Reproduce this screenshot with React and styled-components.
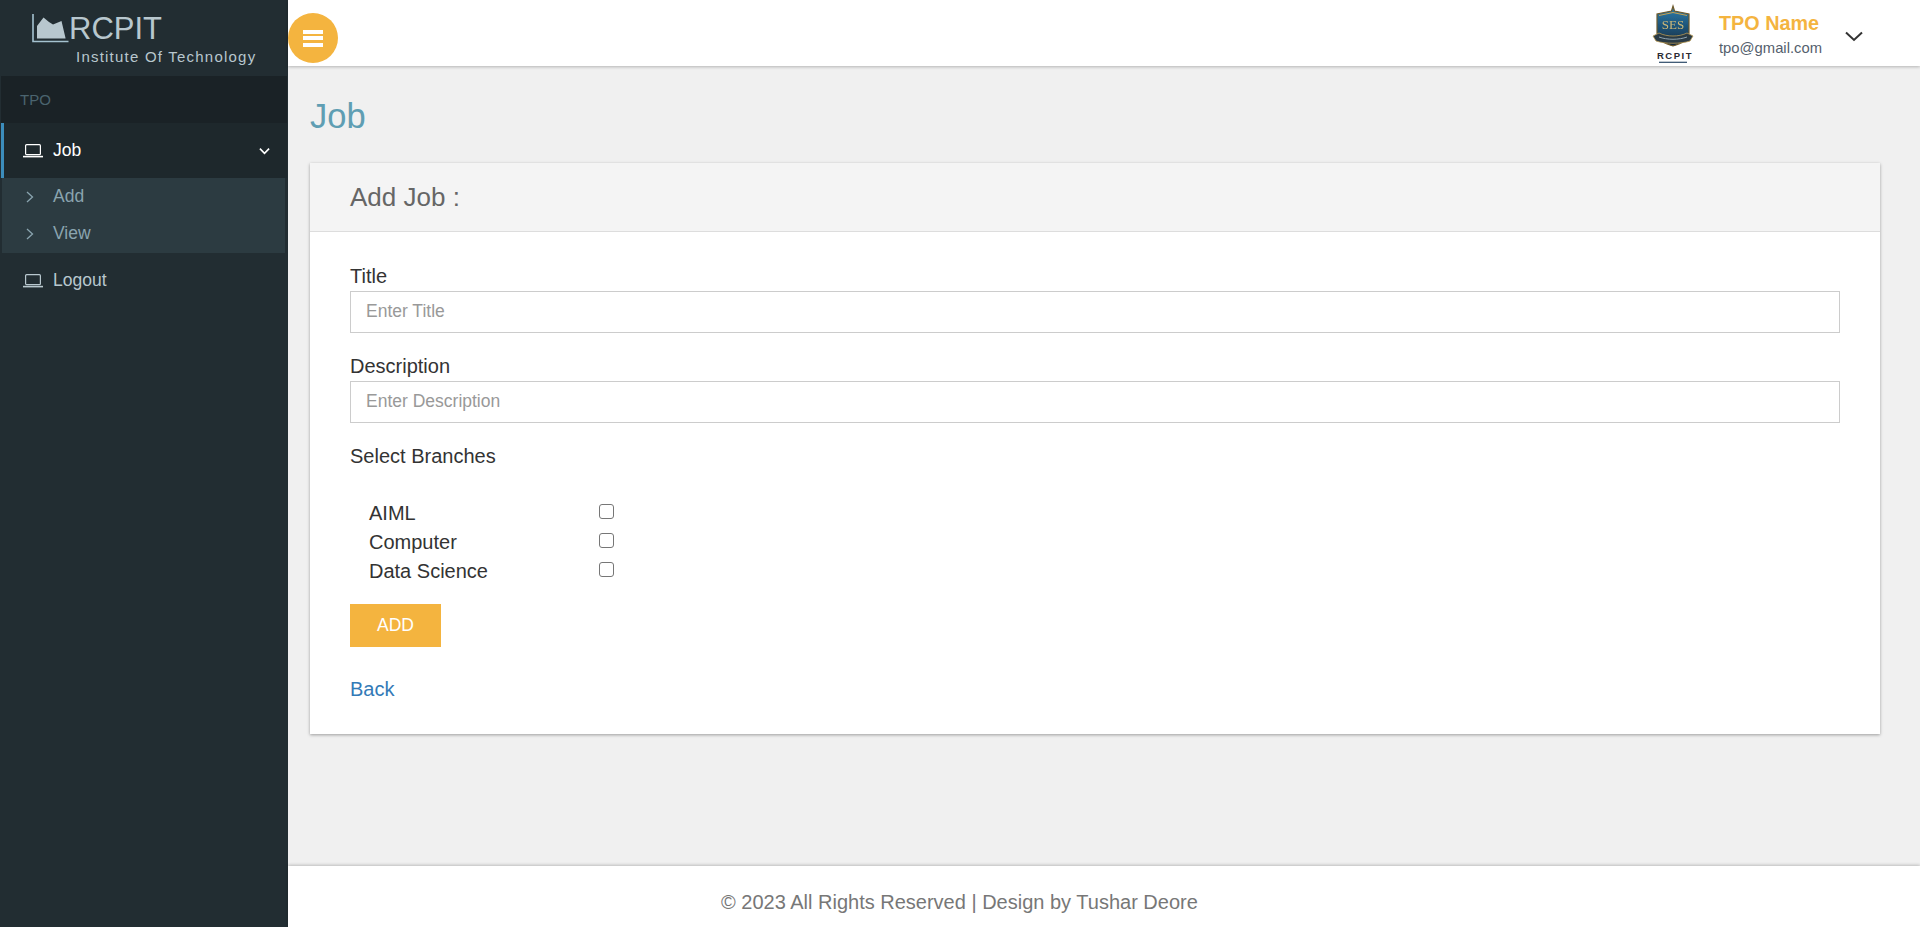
import React from "react";
import styled, { createGlobalStyle } from "styled-components";

const Global = createGlobalStyle`
  html, body { margin: 0; padding: 0; height: 100%; overflow: hidden; }
  body { font-family: "Liberation Sans", Arial, sans-serif; background: #f0f0f0; }
  * { box-sizing: border-box; }
`;

const Page = styled.div`
  display: flex;
  width: 1920px;
  height: 927px;
`;

const Sidebar = styled.aside`
  width: 288px;
  flex: none;
  background: #222d32;
  display: flex;
  flex-direction: column;
  padding: 0 1px;
`;

const Brand = styled.div`
  height: 76px;
  padding: 15px 0 0 31px;
  display: flex;
  flex-direction: column;
`;

const BrandTop = styled.div`
  display: flex;
  align-items: flex-end;
  height: 28px;
`;

const BrandName = styled.span`
  font-size: 31px;
  line-height: 28px;
  color: #b8c7ce;
`;

const BrandSub = styled.div`
  font-size: 15px;
  line-height: 17px;
  margin: 5px 0 0 44px;
  color: #b8c7ce;
  letter-spacing: 1.22px;
  white-space: nowrap;
`;

const SectionLabel = styled.div`
  height: 47px;
  background: #1a2226;
  color: #4b646f;
  font-size: 15px;
  padding-left: 19px;
  display: flex;
  align-items: center;
`;

const MenuItem = styled.div`
  height: 55px;
  display: flex;
  align-items: center;
  padding-left: ${(p) => (p.$active ? "19px" : "22px")};
  background: ${(p) => (p.$active ? "#1e282c" : "transparent")};
  border-left: ${(p) => (p.$active ? "3px solid #3c8dbc" : "none")};
  color: ${(p) => (p.$active ? "#fff" : "#b8c7ce")};
  font-size: 17.5px;
  gap: 10px;
`;

const MenuLabel = styled.span`
  flex: 1;
`;

const Caret = styled.svg`
  margin-right: 17px;
`;

const SubMenu = styled.div`
  background: #2c3b41;
  margin: 0 2px 0 1px;
  height: 75px;
  display: flex;
  flex-direction: column;
`;

const SubItem = styled.div`
  height: 37px;
  display: flex;
  align-items: center;
  padding-left: 24px;
  gap: 19px;
  color: #8aa4af;
  font-size: 17.5px;
`;

const Main = styled.div`
  flex: 1;
  min-width: 0;
  display: flex;
  flex-direction: column;
`;

const Header = styled.header`
  height: 66px;
  flex: none;
  background: #fff;
  box-shadow: 0 1px 3px rgba(0, 0, 0, 0.25);
  display: flex;
  align-items: center;
  position: relative;
`;

const Burger = styled.button`
  width: 50px;
  height: 50px;
  margin-top: 10px;
  border: 0;
  border-radius: 50%;
  background: #f4b43f;
  display: flex;
  flex-direction: column;
  align-items: center;
  justify-content: center;
  gap: 2.5px;
  padding: 0;
`;

const BurgerBar = styled.span`
  width: 20px;
  height: 4px;
  background: #fff;
`;

const UserBox = styled.div`
  margin-left: auto;
  display: flex;
  align-items: center;
  padding-right: 57px;
`;

const UserText = styled.div`
  margin: 0 23px 0 22px;
  padding-top: 2px;
  display: flex;
  flex-direction: column;
`;

const UserName = styled.div`
  color: #f4b43f;
  font-size: 19.8px;
  line-height: 23px;
  font-weight: 700;
`;

const UserMail = styled.div`
  color: #555f6e;
  font-size: 14.8px;
  line-height: 17px;
  margin-top: 5px;
`;

const UserCaret = styled.svg`
  margin-top: 7px;
`;

const Content = styled.main`
  flex: 1;
  padding: 0 40px 0 22px;
`;

const PageTitle = styled.h1`
  margin: 30px 0 0;
  height: 67px;
  font-size: 34.5px;
  line-height: 40px;
  font-weight: 400;
  color: #5f9eb3;
`;

const Card = styled.section`
  background: #fff;
  box-shadow: 0 1px 3px rgba(0, 0, 0, 0.35);
  height: 571px;
`;

const CardHead = styled.div`
  height: 69px;
  background: #f4f4f4;
  border-bottom: 1px solid #ddd;
  padding-left: 40px;
  display: flex;
  align-items: center;
  color: #666;
  font-size: 26px;
`;

const CardBody = styled.form`
  padding: 33px 40px 0;
`;

const FieldLabel = styled.label`
  display: block;
  font-size: 20px;
  line-height: 23px;
  color: #333;
  margin-bottom: 3px;
`;

const TextInput = styled.input`
  display: block;
  width: 100%;
  height: 42px;
  border: 1px solid #ccc;
  padding: 0 15px 1px;
  font-family: inherit;
  font-size: 17.5px;
  margin-bottom: 22px;
  outline: none;
  &::placeholder { color: #999; opacity: 1; }
`;

const BranchHead = styled.div`
  font-size: 20px;
  line-height: 23px;
  color: #333;
  margin: 0 0 31px;
`;

const BranchRow = styled.label`
  display: flex;
  align-items: center;
  height: 29px;
  padding-left: 19px;
  font-size: 20px;
  color: #333;
`;

const BranchName = styled.span`
  width: 230px;
`;

const Check = styled.input`
  width: 15px;
  height: 15px;
  margin: -5px 0 0;
  appearance: none;
  background: #fff;
  border: 1.5px solid #767676;
  border-radius: 3px;
`;

const AddButton = styled.button`
  display: block;
  width: 91px;
  height: 43px;
  margin-top: 18px;
  border: 0;
  background: #f4b43f;
  color: #fff;
  font-family: inherit;
  font-size: 17.5px;
`;

const BackLink = styled.a`
  display: block;
  margin-top: 31px;
  color: #337ab7;
  font-size: 20px;
  line-height: 23px;
`;

const Footer = styled.footer`
  height: 61px;
  flex: none;
  background: #fff;
  box-shadow: 0 -1px 3px rgba(0, 0, 0, 0.22);
  display: flex;
  align-items: center;
  padding: 12px 0 0 433px;
  color: #777;
  font-size: 20px;
`;

const Laptop = ({ color = "currentColor" }) => (
  <svg width="20" height="14" viewBox="0 0 20 14" fill="none">
    <rect x="2.6" y="0.7" width="14.8" height="10" rx="1" stroke={color} strokeWidth="1.2" />
    <rect x="0" y="11.8" width="20" height="1.6" fill={color} />
  </svg>
);

const Chevron = ({ w, h, sw, color }) => (
  <Caret width={w} height={h} viewBox="0 0 12 8" fill="none">
    <path d="M1 1.5 L6 6.5 L11 1.5" stroke={color} strokeWidth={sw} />
  </Caret>
);

const ChevronRight = () => (
  <svg width="8" height="12" viewBox="0 0 8 12" fill="none">
    <path d="M1 1 L6.5 6 L1 11" stroke="#8aa4af" strokeWidth="1.3" />
  </svg>
);

const AreaChart = () => (
  <svg width="37" height="29" viewBox="0 0 37 29" fill="none">
    <path d="M1 0 V27.5 H36.5" stroke="#a5c2d0" strokeWidth="1.6" />
    <path d="M5 24.5 V12 L11.5 3.5 L17 8 L21 10.5 L29.5 7 L33.5 24 V24.5 Z" fill="#b8c7ce" />
  </svg>
);

const CollegeLogo = () => (
  <svg width="48" height="60" viewBox="0 0 48 60">
    <defs>
      <linearGradient id="shield" x1="0" y1="0" x2="0" y2="1">
        <stop offset="0" stopColor="#2f7fae" />
        <stop offset="0.6" stopColor="#1b4c6e" />
        <stop offset="1" stopColor="#16283a" />
      </linearGradient>
      <filter id="soft" x="-5%" y="-5%" width="110%" height="110%">
        <feGaussianBlur stdDeviation="0.35" />
      </filter>
    </defs>
    <g filter="url(#soft)">
      <path d="M24 3 L25.5 8 L40 11 L40 30 C40 37 31 41 24 43 C17 41 8 37 8 30 L8 11 L22.5 8 Z" fill="url(#shield)" stroke="#6f5a2c" strokeWidth="1.2" />
      <path d="M10 12.5 L24 9.5 L38 12.5" stroke="#c9a24d" strokeWidth="1" fill="none" />
      <text x="24" y="26" textAnchor="middle" fontFamily="Liberation Serif, serif" fontSize="13" fill="#cdb877">SES</text>
      <path d="M4 33 L10 30 C18 34 30 34 38 30 L44 33 L41 38 C32 41 16 41 7 38 Z" fill="#2a3a44" stroke="#b99a55" strokeWidth="0.8" />
      <path d="M10 34 C18 37 30 37 38 34" stroke="#8fa6b4" strokeWidth="1" fill="none" />
    </g>
    <text x="8" y="56" fontFamily="Liberation Sans, sans-serif" fontWeight="700" fontSize="9.5" letterSpacing="1.5" fill="#2b2b33">RCPIT</text>
    <path d="M10 59.3 H38" stroke="#2c4a68" strokeWidth="1.2" />
  </svg>
);

export default function App() {
  return (
    <Page>
      <Global />
      <Sidebar>
        <Brand>
          <BrandTop>
            <AreaChart />
            <BrandName>RCPIT</BrandName>
          </BrandTop>
          <BrandSub>Institute Of Technology</BrandSub>
        </Brand>
        <SectionLabel>TPO</SectionLabel>
        <MenuItem $active>
          <Laptop />
          <MenuLabel>Job</MenuLabel>
          <Chevron w={11} h={8} sw={1.8} color="#fff" />
        </MenuItem>
        <SubMenu>
          <SubItem><ChevronRight />Add</SubItem>
          <SubItem><ChevronRight />View</SubItem>
        </SubMenu>
        <MenuItem>
          <Laptop />
          <MenuLabel>Logout</MenuLabel>
        </MenuItem>
      </Sidebar>
      <Main>
        <Header>
          <Burger type="button" aria-label="Menu">
            <BurgerBar /><BurgerBar /><BurgerBar />
          </Burger>
          <UserBox>
            <CollegeLogo />
            <UserText>
              <UserName>TPO Name</UserName>
              <UserMail>tpo@gmail.com</UserMail>
            </UserText>
            <UserCaret width="18" height="11" viewBox="0 0 18 11" fill="none">
              <path d="M1 1.5 L9 9 L17 1.5" stroke="#333" strokeWidth="2" />
            </UserCaret>
          </UserBox>
        </Header>
        <Content>
          <PageTitle>Job</PageTitle>
          <Card>
            <CardHead>Add Job :</CardHead>
            <CardBody>
              <FieldLabel>Title</FieldLabel>
              <TextInput placeholder="Enter Title" />
              <FieldLabel>Description</FieldLabel>
              <TextInput placeholder="Enter Description" />
              <BranchHead>Select Branches</BranchHead>
              <BranchRow><BranchName>AIML</BranchName><Check type="checkbox" /></BranchRow>
              <BranchRow><BranchName>Computer</BranchName><Check type="checkbox" /></BranchRow>
              <BranchRow><BranchName>Data Science</BranchName><Check type="checkbox" /></BranchRow>
              <AddButton type="button">ADD</AddButton>
              <BackLink>Back</BackLink>
            </CardBody>
          </Card>
        </Content>
        <Footer>© 2023 All Rights Reserved | Design by Tushar Deore</Footer>
      </Main>
    </Page>
  );
}
